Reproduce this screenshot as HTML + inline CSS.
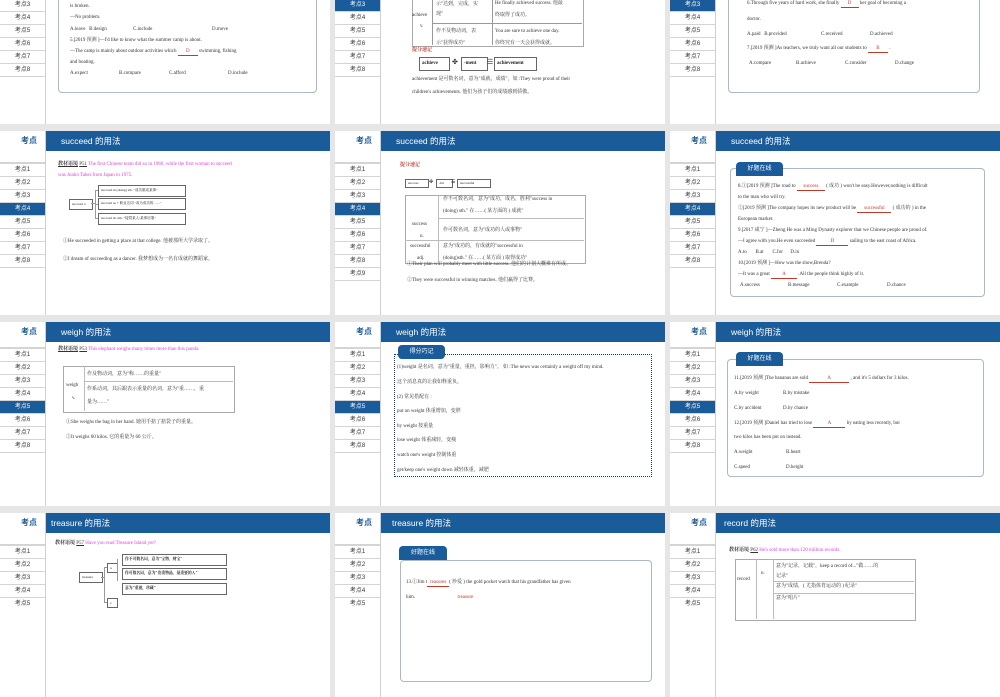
<!DOCTYPE html><html><head><meta charset="utf-8"><style>
body{margin:0;width:1000px;height:600px;background:#e6e6e6;position:relative;overflow:hidden}
.s{position:absolute;width:330px;height:184px;background:#fff;overflow:hidden}
.sb{position:absolute;left:0;top:0;width:45px;height:100%;border-right:1px solid #cfcfcf}
.sbh{position:absolute;left:0;top:0;width:37px;height:20px;text-align:right;font:bold 8px "Liberation Sans","Noto Sans CJK SC",sans-serif;color:#1a5b9a;line-height:20px}
.hd{position:absolute;left:46px;top:0;right:0;height:20px;background:#1a5b9a;color:#fff;font:8.5px "Liberation Sans","Noto Sans CJK SC",sans-serif;line-height:20px;padding-left:15px}
.it{position:absolute;left:0;width:45px;height:12px;border-top:1px solid #d4d4d4;font:6px "Liberation Sans","Noto Sans CJK SC",sans-serif;text-align:center;line-height:12px;color:#333;background:#fff}
.it.a{background:#1a5b9a;color:#fff}
.t{position:absolute;font:5px "Liberation Serif","Noto Serif CJK SC",serif;white-space:nowrap;color:#333;line-height:7px}
.m{color:#e040e0}.r{color:#c0392b}.u{text-decoration:underline}
.box{position:absolute;border:1px solid #aab8c8;border-radius:4px}
.tab{position:absolute;background:#1a5b9a;color:#fff;border-radius:4px 4px 0 0;font:6px "Liberation Sans","Noto Sans CJK SC",sans-serif;text-align:center;line-height:14px}
.b{position:absolute;border:1px solid #666;font:4px "Liberation Serif","Noto Serif CJK SC",serif;white-space:nowrap;line-height:8px;padding-left:2px;color:#222}
.ln{position:absolute;background:#999}
.cl{position:absolute;border:1px solid #aaa}
.bl{display:inline-block;border-bottom:1px solid #c0392b;color:#c0392b;text-align:center}
</style></head><body>

<!-- ROW 0 -->
<div class="s" style="left:0;top:-60px">
<div class="sb"><div class="sbh">考点</div>
<div class="it" style="top:58px">考点3</div><div class="it" style="top:71px">考点4</div><div class="it" style="top:84px">考点5</div><div class="it" style="top:97px">考点6</div><div class="it" style="top:110px">考点7</div><div class="it" style="top:123px">考点8</div><div class="it" style="top:136px;height:0"></div></div>
<div class="hd">achieve 的用法</div>
<div class="box" style="left:58px;top:30px;width:257px;height:121px"></div>
<div class="t" style="left:70px;top:63px">is broken.</div>
<div class="t" style="left:70px;top:74px">—No problem.</div>
<div class="t" style="left:70px;top:86px">A.leave&nbsp;&nbsp; B.design</div><div class="t" style="left:133px;top:86px">C.include</div><div class="t" style="left:212px;top:86px">D.move</div>
<div class="t" style="left:70px;top:97px">5.[2019 预测 ]—I'd like to know what the summer camp is about.</div>
<div class="t" style="left:70px;top:108px">—The camp is mainly about outdoor activities which <span class="bl" style="width:20px">D</span> swimming, fishing</div>
<div class="t" style="left:70px;top:119px">and boating.</div>
<div class="t" style="left:70px;top:130px">A.expect</div><div class="t" style="left:119px;top:130px">B.compare</div><div class="t" style="left:169px;top:130px">C.afford</div><div class="t" style="left:228px;top:130px">D.include</div>
</div>

<div class="s" style="left:335px;top:-60px">
<div class="sb"><div class="sbh">考点</div>
<div class="it a" style="top:58px">考点3</div><div class="it" style="top:71px">考点4</div><div class="it" style="top:84px">考点5</div><div class="it" style="top:97px">考点6</div><div class="it" style="top:110px">考点7</div><div class="it" style="top:123px">考点8</div><div class="it" style="top:136px;height:0"></div></div>
<div class="hd">achieve 的用法</div>
<div class="cl" style="left:77px;top:40px;width:170px;height:65px"></div>
<div class="ln" style="left:97px;top:40px;width:1px;height:65px"></div>
<div class="ln" style="left:157px;top:40px;width:1px;height:65px"></div>
<div class="ln" style="left:97px;top:83px;width:150px;height:1px"></div>
<div class="t" style="left:101px;top:61px">示"达到，完成，实</div><div class="t" style="left:101px;top:71px">现"</div>
<div class="t" style="left:160px;top:60px">He finally achieved success. 他最</div><div class="t" style="left:160px;top:72px">终取得了成功。</div>
<div class="t" style="left:77px;top:72px">achieve</div><div class="t" style="left:85px;top:83px">v.</div>
<div class="t" style="left:101px;top:88px">作不及物动词，表</div><div class="t" style="left:101px;top:100px">示"获得成功"</div>
<div class="t" style="left:160px;top:88px">You are sure to achieve one day.</div><div class="t" style="left:160px;top:100px">你终究有一天会获得成就。</div>
<div class="t r" style="left:77px;top:107px;font-weight:bold">提分速记</div>
<div class="b" style="left:84px;top:117px;width:27px;height:12px;line-height:12px;font-size:5px;font-weight:bold">achieve</div>
<div class="t" style="left:117px;top:119px;font-size:7px">✤</div>
<div class="b" style="left:126px;top:117px;width:23px;height:12px;line-height:12px;font-size:5px;font-weight:bold">-ment</div>
<div class="t" style="left:152px;top:119px;font-size:7px">☰</div>
<div class="b" style="left:159px;top:117px;width:39px;height:12px;line-height:12px;font-size:5px;font-weight:bold">achievement</div>
<div class="t" style="left:77px;top:136px">achievement 是可数名词，意为"成就，成绩"，如 :They were proud of their</div>
<div class="t" style="left:77px;top:149px">children's achievements. 他们为孩子们的成绩感到骄傲。</div>
</div>

<div class="s" style="left:670px;top:-60px">
<div class="sb"><div class="sbh">考点</div>
<div class="it a" style="top:58px">考点3</div><div class="it" style="top:71px">考点4</div><div class="it" style="top:84px">考点5</div><div class="it" style="top:97px">考点6</div><div class="it" style="top:110px">考点7</div><div class="it" style="top:123px">考点8</div><div class="it" style="top:136px;height:0"></div></div>
<div class="hd">achieve 的用法</div>
<div class="box" style="left:58px;top:30px;width:250px;height:121px"></div>
<div class="t" style="left:77px;top:60px">6.Through five years of hard work, she finally <span class="bl" style="width:18px">D</span> her goal of becoming a</div>
<div class="t" style="left:77px;top:76px">doctor.</div>
<div class="t" style="left:77px;top:91px">A.paid&nbsp;&nbsp; B.provided</div><div class="t" style="left:151px;top:91px">C.received</div><div class="t" style="left:200px;top:91px">D.achieved</div>
<div class="t" style="left:77px;top:105px">7.[2019 预测 ]As teachers, we truly want all our students to <span class="bl" style="width:20px">B</span> .</div>
<div class="t" style="left:79px;top:120px">A.compare</div><div class="t" style="left:126px;top:120px">B.achieve</div><div class="t" style="left:175px;top:120px">C.consider</div><div class="t" style="left:225px;top:120px">D.change</div>
</div>

<!-- ROW 1 -->
<div class="s" style="left:0;top:131px">
<div class="sb"><div class="sbh">考点</div>
<div class="it" style="top:31px;height:0"></div><div class="it" style="top:32px">考点1</div><div class="it" style="top:45px">考点2</div><div class="it" style="top:58px">考点3</div><div class="it a" style="top:71px">考点4</div><div class="it" style="top:84px">考点5</div><div class="it" style="top:97px">考点6</div><div class="it" style="top:110px">考点7</div><div class="it" style="top:123px">考点8</div><div class="it" style="top:136px;height:0"></div></div>
<div class="hd">succeed 的用法</div>
<div class="t" style="left:58px;top:30px"><b class="u">教材语境</b> <span class="u">P51</span> <span class="m">The first Chinese team did so in 1960, while the first woman to succeed</span></div>
<div class="t m" style="left:58px;top:41px">was Junko Tabei from Japan in 1975.</div>
<div class="b" style="left:69px;top:68px;width:20px;height:9px;font-size:3.5px">succeed v.</div>
<div class="ln" style="left:91px;top:72px;width:4px;height:1px"></div>
<div class="ln" style="left:95px;top:59px;width:1px;height:28px"></div>
<div class="ln" style="left:95px;top:59px;width:3px;height:1px"></div><div class="ln" style="left:95px;top:73px;width:3px;height:1px"></div><div class="ln" style="left:95px;top:87px;width:3px;height:1px"></div>
<div class="b" style="left:98px;top:54px;width:84px;height:10px;font-size:3.5px">succeed in (doing) sth. "成功做成某事"</div>
<div class="b" style="left:98px;top:67px;width:84px;height:10px;font-size:3.5px">succeed as + 职业名词 "成为成功的……"</div>
<div class="b" style="left:98px;top:82px;width:84px;height:10px;font-size:3.5px">succeed sb./sth. "接替某人/某事后继"</div>
<div class="t" style="left:63px;top:107px">①He succeeded in getting a place at that college. 他被那所大学录取了。</div>
<div class="t" style="left:63px;top:125px">②I dream of succeeding as a dancer. 我梦想成为一名有成就的舞蹈家。</div>
</div>

<div class="s" style="left:335px;top:131px">
<div class="sb"><div class="sbh">考点</div>
<div class="it" style="top:31px;height:0"></div><div class="it" style="top:32px">考点1</div><div class="it" style="top:45px">考点2</div><div class="it" style="top:58px">考点3</div><div class="it a" style="top:71px">考点4</div><div class="it" style="top:84px">考点5</div><div class="it" style="top:97px">考点6</div><div class="it" style="top:110px">考点7</div><div class="it" style="top:123px">考点8</div><div class="it" style="top:136px">考点9</div><div class="it" style="top:149px;height:0"></div></div>
<div class="hd">succeed 的用法</div>
<div class="t r" style="left:65px;top:31px;font-weight:bold">提分速记</div>
<div class="b" style="left:70px;top:48px;width:20px;height:7px;line-height:7px;font-size:3.5px">success</div>
<div class="t" style="left:94px;top:48px;font-size:5px">✤</div>
<div class="b" style="left:101px;top:48px;width:13px;height:7px;line-height:7px;font-size:3.5px">-ful</div>
<div class="t" style="left:116px;top:48px;font-size:5px">☰</div>
<div class="b" style="left:122px;top:48px;width:30px;height:7px;line-height:7px;font-size:3.5px">successful</div>
<div class="cl" style="left:70px;top:64px;width:179px;height:67px"></div>
<div class="ln" style="left:103px;top:64px;width:1px;height:67px;background:#bbb"></div>
<div class="ln" style="left:104px;top:87px;width:145px;height:1px;background:#bbb"></div>
<div class="ln" style="left:70px;top:109px;width:179px;height:1px;background:#bbb"></div>
<div class="t" style="left:108px;top:65px">作不可数名词，意为"成功，成名，胜利"success in</div>
<div class="t" style="left:108px;top:77px">(doing) sth." 在……( 某方面的 ) 成就"</div>
<div class="t" style="left:108px;top:96px">作可数名词，意为"成功的人或事物"</div>
<div class="t" style="left:77px;top:90px">success</div><div class="t" style="left:85px;top:102px">n.</div>
<div class="t" style="left:75px;top:112px">successful</div><div class="t" style="left:82px;top:124px">adj.</div>
<div class="t" style="left:108px;top:112px">意为"成功的，有成就的"successful in</div>
<div class="t" style="left:108px;top:124px">(doing)sth." 在……( 某方面 ) 取得成功"</div>
<div class="t" style="left:72px;top:130px">①Their plan will probably meet with little success. 他们的计划大概难有所成。</div>
<div class="t" style="left:72px;top:146px">②They were successful in winning matches. 他们赢得了比赛。</div>
</div>

<div class="s" style="left:670px;top:131px">
<div class="sb"><div class="sbh">考点</div>
<div class="it" style="top:31px;height:0"></div><div class="it" style="top:32px">考点1</div><div class="it" style="top:45px">考点2</div><div class="it" style="top:58px">考点3</div><div class="it a" style="top:71px">考点4</div><div class="it" style="top:84px">考点5</div><div class="it" style="top:97px">考点6</div><div class="it" style="top:110px">考点7</div><div class="it" style="top:123px">考点8</div><div class="it" style="top:136px;height:0"></div></div>
<div class="hd">succeed 的用法</div>
<div class="box" style="left:60px;top:37px;width:253px;height:127px"></div>
<div class="tab" style="left:66px;top:31px;width:47px">好题在线</div>
<div class="t" style="left:68px;top:52px">8.①[2019 预测 ]The road to <span class="bl" style="width:28px">success</span> ( 成功 ) won't be easy.However,nothing is difficult</div>
<div class="t" style="left:68px;top:63px">to the man who will try.</div>
<div class="t" style="left:68px;top:74px">②[2019 预测 ]The company hopes its new product will be <span class="bl" style="width:34px">successful</span> ( 成功的 ) in the</div>
<div class="t" style="left:68px;top:85px">European market.</div>
<div class="t" style="left:68px;top:96px">9.[2017 咸宁 ]—Zheng He was a Ming Dynasty explorer that we Chinese people are proud of.</div>
<div class="t" style="left:68px;top:107px">—I agree with you.He even succeeded <span class="bl" style="width:32px">D</span> sailing to the east coast of Africa.</div>
<div class="t" style="left:68px;top:118px">A.to&nbsp;&nbsp;&nbsp;&nbsp;&nbsp;&nbsp; B.at&nbsp;&nbsp;&nbsp;&nbsp;&nbsp;&nbsp; C.for&nbsp;&nbsp;&nbsp;&nbsp;&nbsp; D.in</div>
<div class="t" style="left:68px;top:129px">10.[2019 预测 ]—How was the show,Brenda?</div>
<div class="t" style="left:68px;top:140px">—It was a great <span class="bl" style="width:26px">A</span> .All the people think highly of it.</div>
<div class="t" style="left:70px;top:151px">A.success</div><div class="t" style="left:118px;top:151px">B.message</div><div class="t" style="left:167px;top:151px">C.example</div><div class="t" style="left:217px;top:151px">D.chance</div>
</div>

<!-- ROW 2 -->
<div class="s" style="left:0;top:322px">
<div class="sb"><div class="sbh">考点</div>
<div class="it" style="top:25px;height:0"></div><div class="it" style="top:26px">考点1</div><div class="it" style="top:39px">考点2</div><div class="it" style="top:52px">考点3</div><div class="it" style="top:65px">考点4</div><div class="it a" style="top:78px">考点5</div><div class="it" style="top:91px">考点6</div><div class="it" style="top:104px">考点7</div><div class="it" style="top:117px">考点8</div><div class="it" style="top:130px;height:0"></div></div>
<div class="hd">weigh 的用法</div>
<div class="t" style="left:58px;top:24px"><b class="u">教材语境</b> <span class="u">P53</span> <span class="m">This elephant weighs many times more than this panda.</span></div>
<div class="cl" style="left:63px;top:44px;width:170px;height:45px"></div>
<div class="ln" style="left:84px;top:44px;width:1px;height:45px;background:#bbb"></div>
<div class="ln" style="left:84px;top:59px;width:149px;height:1px;background:#bbb"></div>
<div class="t" style="left:66px;top:60px">weigh</div><div class="t" style="left:72px;top:73px">v.</div>
<div class="t" style="left:87px;top:49px">作及物动词，意为"称……的重量"</div>
<div class="t" style="left:87px;top:64px">作系动词，其后跟表示重量的名词，意为"重……，重</div>
<div class="t" style="left:87px;top:77px">量为……"</div>
<div class="t" style="left:66px;top:97px">①She weighs the bag in her hand. 她用手掂了掂袋子的重量。</div>
<div class="t" style="left:66px;top:112px">②It weighs 60 kilos. 它的重量为 60 公斤。</div>
</div>

<div class="s" style="left:335px;top:322px">
<div class="sb"><div class="sbh">考点</div>
<div class="it" style="top:25px;height:0"></div><div class="it" style="top:26px">考点1</div><div class="it" style="top:39px">考点2</div><div class="it" style="top:52px">考点3</div><div class="it" style="top:65px">考点4</div><div class="it a" style="top:78px">考点5</div><div class="it" style="top:91px">考点6</div><div class="it" style="top:104px">考点7</div><div class="it" style="top:117px">考点8</div><div class="it" style="top:130px;height:0"></div></div>
<div class="hd">weigh 的用法</div>
<div style="position:absolute;left:59px;top:32px;width:256px;height:121px;border:1px dotted #1a3a6a"></div>
<div class="tab" style="left:63px;top:23px;width:47px;border-radius:4px">得分巧记</div>
<div class="t" style="left:62px;top:42px">(1)weight 是名词，意为"重量，重担，影响力"。 如 :The news was certainly a weight off my mind.</div>
<div class="t" style="left:62px;top:57px">这个消息真的让我如释重负。</div>
<div class="t" style="left:62px;top:72px">(2) 常见搭配有 :</div>
<div class="t" style="left:62px;top:86px">put on weight 体重增加，变胖</div>
<div class="t" style="left:62px;top:101px">by weight 按重量</div>
<div class="t" style="left:62px;top:115px">lose weight 体重减轻，变瘦</div>
<div class="t" style="left:62px;top:130px">watch one's weight 控制体重</div>
<div class="t" style="left:62px;top:145px">get/keep one's weight down 减轻体重，减肥</div>
</div>

<div class="s" style="left:670px;top:322px">
<div class="sb"><div class="sbh">考点</div>
<div class="it" style="top:25px;height:0"></div><div class="it" style="top:26px">考点1</div><div class="it" style="top:39px">考点2</div><div class="it" style="top:52px">考点3</div><div class="it" style="top:65px">考点4</div><div class="it a" style="top:78px">考点5</div><div class="it" style="top:91px">考点6</div><div class="it" style="top:104px">考点7</div><div class="it" style="top:117px">考点8</div><div class="it" style="top:130px;height:0"></div></div>
<div class="hd">weigh 的用法</div>
<div class="box" style="left:57px;top:37px;width:255px;height:116px"></div>
<div class="tab" style="left:66px;top:30px;width:47px">好题在线</div>
<div class="t" style="left:64px;top:53px">11.[2019 预测 ]The bananas are sold <span class="bl" style="width:40px">A</span> , and it's 5 dollars for 3 kilos.</div>
<div class="t" style="left:64px;top:68px">A.by weight</div><div class="t" style="left:113px;top:68px">B.by mistake</div>
<div class="t" style="left:64px;top:83px">C.by accident</div><div class="t" style="left:113px;top:83px">D.by chance</div>
<div class="t" style="left:64px;top:98px">12.[2019 预测 ]Daniel has tried to lose <span class="bl" style="width:32px">A</span> by eating less recently, but</div>
<div class="t" style="left:64px;top:112px">two kilos has been put on instead.</div>
<div class="t" style="left:64px;top:127px">A.weight</div><div class="t" style="left:116px;top:127px">B.heart</div>
<div class="t" style="left:64px;top:142px">C.speed</div><div class="t" style="left:116px;top:142px">D.height</div>
</div>

<!-- ROW 3 -->
<div class="s" style="left:0;top:513px">
<div class="sb"><div class="sbh">考点</div>
<div class="it" style="top:31px;height:0"></div><div class="it" style="top:32px">考点1</div><div class="it" style="top:45px">考点2</div><div class="it" style="top:58px">考点3</div><div class="it" style="top:71px">考点4</div><div class="it" style="top:84px">考点5</div></div>
<div class="hd" style="padding-left:5px">treasure 的用法</div>
<div class="t" style="left:55px;top:27px"><b>教材语境</b> <span class="u">P57</span> <span class="m">Have you read Treasure Island yet?</span></div>
<div class="b" style="left:79px;top:59px;width:20px;height:9px;font-size:3.5px">treasure</div>
<div class="ln" style="left:101px;top:64px;width:3px;height:1px"></div>
<div class="ln" style="left:104px;top:54px;width:1px;height:36px"></div>
<div class="ln" style="left:104px;top:54px;width:3px;height:1px"></div><div class="ln" style="left:104px;top:89px;width:3px;height:1px"></div>
<div class="b" style="left:107px;top:50px;width:7px;height:8px;font-size:3px">n.</div>
<div class="b" style="left:107px;top:85px;width:7px;height:8px;font-size:3px">v.</div>
<div class="ln" style="left:117px;top:46px;width:1px;height:22px"></div>
<div class="b" style="left:122px;top:41px;width:101px;height:10px;font-size:3.8px;font-weight:bold">作不可数名词，意为"宝物，财宝"</div>
<div class="b" style="left:122px;top:55px;width:101px;height:10px;font-size:3.8px;font-weight:bold">作可数名词，意为"贵重物品，最重要的人"</div>
<div class="b" style="left:122px;top:70px;width:101px;height:10px;font-size:3.8px;font-weight:bold">意为"重视，珍藏"</div>
</div>

<div class="s" style="left:335px;top:513px">
<div class="sb"><div class="sbh">考点</div>
<div class="it" style="top:31px;height:0"></div><div class="it" style="top:32px">考点1</div><div class="it" style="top:45px">考点2</div><div class="it" style="top:58px">考点3</div><div class="it" style="top:71px">考点4</div><div class="it" style="top:84px">考点5</div></div>
<div class="hd" style="padding-left:11px">treasure 的用法</div>
<div class="box" style="left:65px;top:47px;width:250px;height:120px"></div>
<div class="tab" style="left:64px;top:33px;width:48px">好题在线</div>
<div class="t" style="left:71px;top:66px">13.①Jim t<span class="bl" style="width:22px">reasures</span>( 珍爱 ) the gold pocket watch that his grandfather has given</div>
<div class="t" style="left:71px;top:81px">him.&nbsp;&nbsp;&nbsp;&nbsp;&nbsp;&nbsp;&nbsp;&nbsp;&nbsp;&nbsp;&nbsp;&nbsp;&nbsp;&nbsp;&nbsp;&nbsp;&nbsp;&nbsp;&nbsp;&nbsp;&nbsp;&nbsp;&nbsp;&nbsp;&nbsp;&nbsp;&nbsp;&nbsp;&nbsp;&nbsp;&nbsp;&nbsp;&nbsp;&nbsp;<span class="r">treasure</span></div>
</div>

<div class="s" style="left:670px;top:513px">
<div class="sb"><div class="sbh">考点</div>
<div class="it" style="top:31px;height:0"></div><div class="it" style="top:32px">考点1</div><div class="it" style="top:45px">考点2</div><div class="it" style="top:58px">考点3</div><div class="it" style="top:71px">考点4</div><div class="it" style="top:84px">考点5</div></div>
<div class="hd" style="padding-left:8px">record 的用法</div>
<div class="t" style="left:59px;top:34px"><b>教材语境</b> <span class="u">P62</span> <span class="m">He's sold more than 120 million records.</span></div>
<div class="cl" style="left:65px;top:46px;width:179px;height:60px"></div>
<div class="ln" style="left:86px;top:46px;width:1px;height:60px;background:#bbb"></div>
<div class="ln" style="left:103px;top:46px;width:1px;height:60px;background:#bbb"></div>
<div class="ln" style="left:104px;top:68px;width:140px;height:1px;background:#bbb"></div>
<div class="ln" style="left:104px;top:80px;width:140px;height:1px;background:#bbb"></div>
<div class="t" style="left:67px;top:63px">record</div><div class="t" style="left:91px;top:57px">n.</div>
<div class="t" style="left:106px;top:50px">意为"记录，记载"，keep a record of..."做……的</div>
<div class="t" style="left:106px;top:60px">记录"</div>
<div class="t" style="left:106px;top:70px">意为"成绩，( 尤指体育运动的 ) 纪录"</div>
<div class="t" style="left:106px;top:82px">意为"唱片"</div>
</div>

</body></html>
